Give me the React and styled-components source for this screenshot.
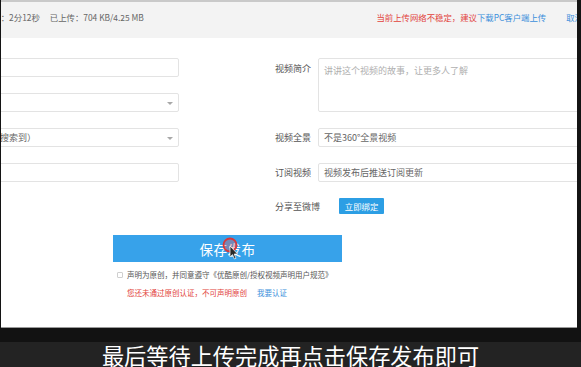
import styled, { createGlobalStyle } from "styled-components"

const Global = createGlobalStyle`
    html, body {
        margin: 0;
        padding: 0;
        background: #141414;
    }
    * {
        box-sizing: border-box;
    }
`

const Frame = styled.div`
    width: 581px;
    height: 367px;
    display: flex;
    flex-direction: column;
    overflow: hidden;
    background: #141414;
    font-family: "Noto Sans CJK SC", "Noto Sans", sans-serif;
`

const Screen = styled.div`
    position: relative;
    height: 328px;
    margin: 0 4px 0 1px;
    background: #fff;
    border-top: 2px solid #c9c9c9;
    border-bottom: 1px solid #9a9a9a;
    overflow: hidden;
`

const TopBar = styled.div`
    height: 36px;
    padding-bottom: 7px;
    display: flex;
    align-items: center;
    background: #f3f3f3;
    font-size: 8.4px;
    color: #666;
    white-space: nowrap;
`

const Stat = styled.span`
    margin-left: ${p => p.$first ? "-17px" : "10px"};
`

const Warning = styled.span`
    margin-left: auto;
    color: #e2423b;
`

const Link = styled.span`
    color: #3b8fdb;
`

const Cancel = styled.span`
    margin-left: 20px;
    margin-right: -6px;
    color: #3b8fdb;
`

const FormGrid = styled.div`
    display: grid;
    grid-template-columns: 239px 96px 43px 1fr;
    grid-template-rows: repeat(4, 19px) 16px;
    row-gap: 16px;
    margin: 20px -30px 0 -61px;
    font-size: 9px;
`

const Field = styled.div`
    position: relative;
    grid-column: ${p => p.$col || 1};
    grid-row: ${p => p.$rows || "auto"};
    display: flex;
    align-items: ${p => p.$area ? "flex-start" : "center"};
    padding: ${p => p.$area ? "5px 5px" : "0 5px"};
    border: 1px solid #e3e3e3;
    border-radius: 2px;
    color: ${p => p.$muted ? "#b0b0b0" : "#666"};
    white-space: nowrap;
    overflow: hidden;

    ${p => p.$select && `
        &::after {
            content: "";
            position: absolute;
            right: 5px;
            top: 8px;
            border-left: 3px solid transparent;
            border-right: 3px solid transparent;
            border-top: 3px solid #a8a8a8;
        }
    `}
`

const Label = styled.div`
    grid-column: 3;
    grid-row: ${p => p.$row};
    display: flex;
    align-items: ${p => p.$top ? "flex-start" : "center"};
    padding-top: ${p => p.$top ? "4px" : "0"};
    color: #555;
    white-space: nowrap;
`

const ShareRow = styled.div`
    grid-column: 3 / 5;
    grid-row: 5;
    display: flex;
    align-items: center;
    gap: 19px;
    color: #555;
`

const BindButton = styled.div`
    width: 45px;
    height: 16px;
    display: flex;
    align-items: center;
    justify-content: center;
    background: #2c9ee4;
    color: #fff;
    font-size: 8.4px;
    border-radius: 1px;
`

const SubmitArea = styled.div`
    margin-top: 21px;
    padding-left: 112px;
    font-size: 7.5px;
`

const SaveButton = styled.div`
    position: relative;
    width: 229px;
    height: 27px;
    display: flex;
    align-items: center;
    justify-content: center;
    background: #37a2ea;
    color: #fff;
    font-size: 13.5px;
    letter-spacing: 0.5px;
`

const Cursor = styled.svg`
    position: absolute;
    left: 109px;
    top: 2px;
`

const AgreeRow = styled.div`
    margin-top: 7px;
    padding-left: 4px;
    display: flex;
    align-items: center;
    gap: 4px;
    color: #555;
    white-space: nowrap;
`

const Check = styled.span`
    width: 6px;
    height: 6px;
    border: 1px solid #cfcfcf;
    border-radius: 1px;
`

const NoticeRow = styled.div`
    margin-top: 7px;
    padding-left: 14px;
    display: flex;
    gap: 10px;
    white-space: nowrap;
`

const Red = styled.span`
    color: #e2423b;
`

const Band = styled.div`
    height: 14px;
    background: #121212;
`

const Subtitle = styled.div`
    height: 25px;
    padding-top: 2px;
    background: #232323;
    color: #fff;
    font-size: 22.2px;
    line-height: 22px;
    text-align: center;
    white-space: nowrap;
    overflow: hidden;
`

const App = () => {
    return (
        <Frame>
            <Global />
            <Screen>
                <TopBar>
                    <Stat $first>用时：2分12秒</Stat>
                    <Stat>已上传：704 KB/4.25 MB</Stat>
                    <Warning>当前上传网络不稳定，建议<Link>下载PC客户端上传</Link></Warning>
                    <Cancel>取消</Cancel>
                </TopBar>

                <FormGrid>
                    <Field $rows="1" />
                    <Field $rows="2" $select />
                    <Field $rows="3" $select>所有人（可被搜索到）</Field>
                    <Field $rows="4" />

                    <Label $row="1" $top>视频简介</Label>
                    <Field $col="4" $rows="1 / 3" $area $muted>讲讲这个视频的故事，让更多人了解</Field>

                    <Label $row="3">视频全景</Label>
                    <Field $col="4" $rows="3">不是360°全景视频</Field>

                    <Label $row="4">订阅视频</Label>
                    <Field $col="4" $rows="4">视频发布后推送订阅更新</Field>

                    <ShareRow>
                        分享至微博
                        <BindButton>立即绑定</BindButton>
                    </ShareRow>
                </FormGrid>

                <SubmitArea>
                    <SaveButton>
                        保存发布
                        <Cursor width="20" height="26" viewBox="0 0 20 26">
                            <circle cx="8" cy="8" r="6.5" fill="rgba(235,90,90,0.35)" stroke="#d8373a" strokeWidth="1.8" />
                            <path d="M8 9 L8 20 L10.5 17.6 L12.4 22 L14 21.3 L12.2 17 L15.6 17 Z" fill="#2a2a2a" stroke="#fff" strokeWidth="0.7" />
                        </Cursor>
                    </SaveButton>
                    <AgreeRow>
                        <Check />
                        声明为原创，并同意遵守《优酷原创/授权视频声明用户规范》
                    </AgreeRow>
                    <NoticeRow>
                        <Red>您还未通过原创认证，不可声明原创</Red>
                        <Link>我要认证</Link>
                    </NoticeRow>
                </SubmitArea>
            </Screen>
            <Band />
            <Subtitle>最后等待上传完成再点击保存发布即可</Subtitle>
        </Frame>
    )
}

export default App
